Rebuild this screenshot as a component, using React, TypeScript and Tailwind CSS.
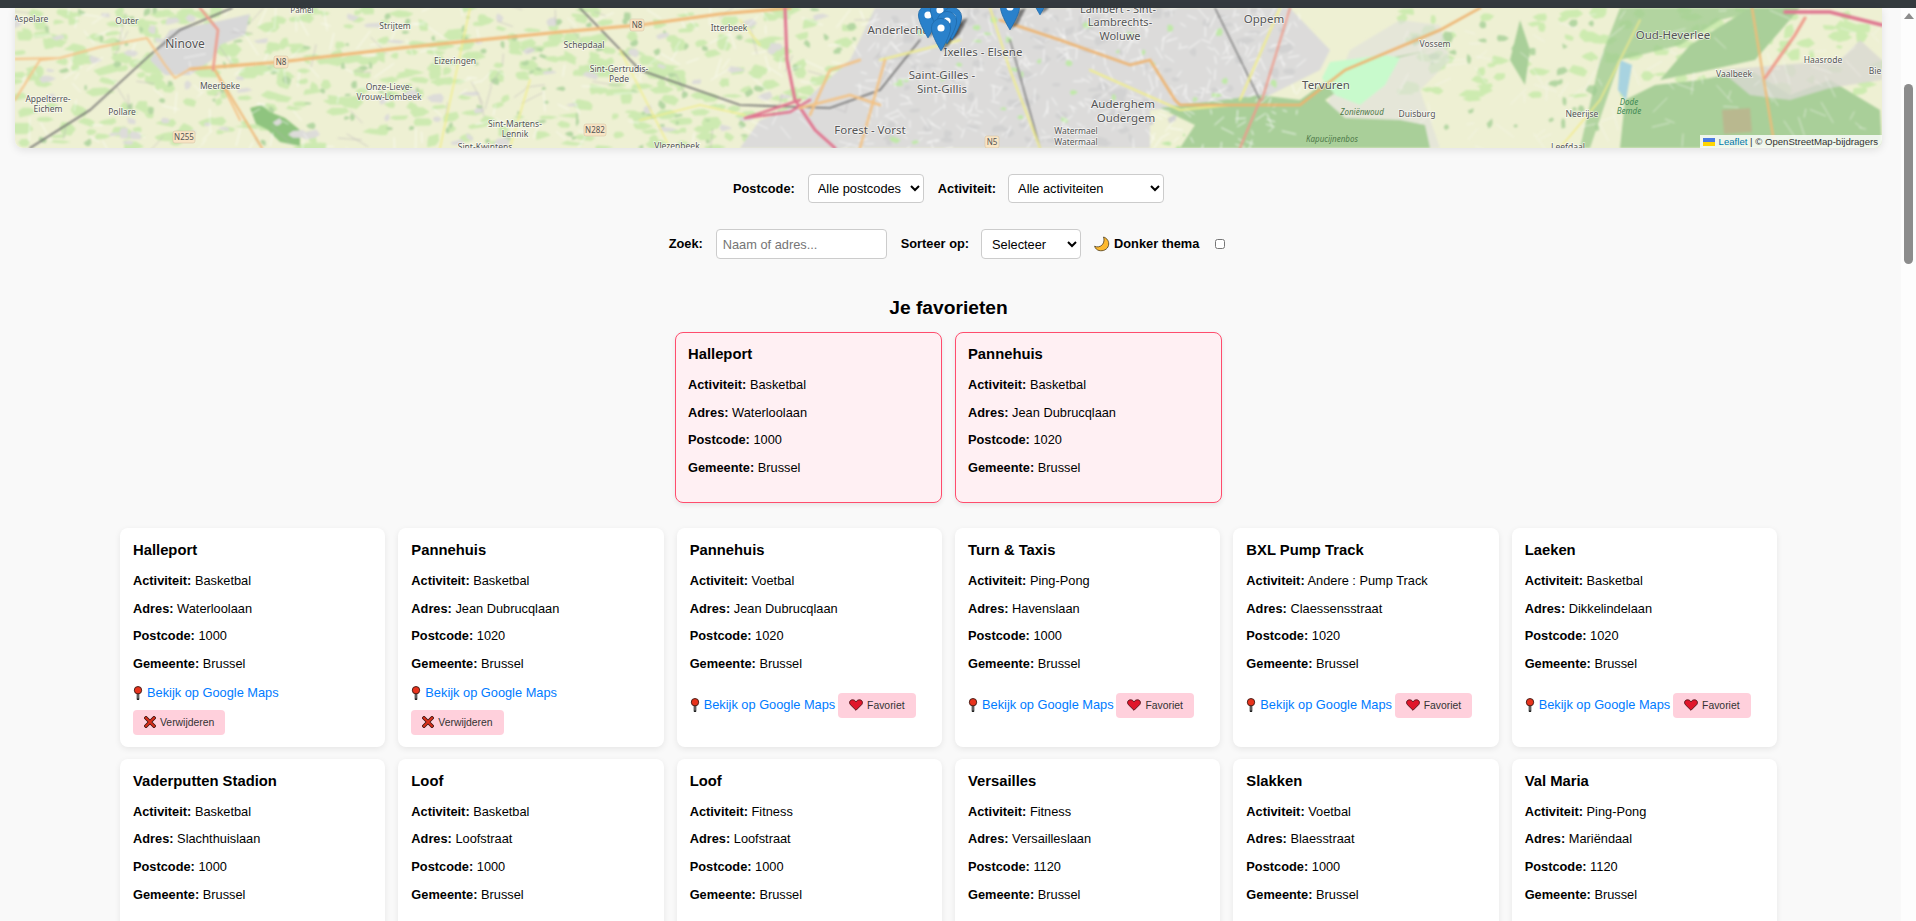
import React from 'react';

interface Spot {
  name: string;
  activity: string;
  address: string;
  postcode: string;
  removable?: boolean;
}

const favorites: Spot[] = [
  { name: 'Halleport', activity: 'Basketbal', address: 'Waterloolaan', postcode: '1000' },
  { name: 'Pannehuis', activity: 'Basketbal', address: 'Jean Dubrucqlaan', postcode: '1020' },
];

const spots: Spot[] = [
  { name: 'Halleport', activity: 'Basketbal', address: 'Waterloolaan', postcode: '1000', removable: true },
  { name: 'Pannehuis', activity: 'Basketbal', address: 'Jean Dubrucqlaan', postcode: '1020', removable: true },
  { name: 'Pannehuis', activity: 'Voetbal', address: 'Jean Dubrucqlaan', postcode: '1020' },
  { name: 'Turn & Taxis', activity: 'Ping-Pong', address: 'Havenslaan', postcode: '1000' },
  { name: 'BXL Pump Track', activity: 'Andere : Pump Track', address: 'Claessensstraat', postcode: '1020' },
  { name: 'Laeken', activity: 'Basketbal', address: 'Dikkelindelaan', postcode: '1020' },
  { name: 'Vaderputten Stadion', activity: 'Basketbal', address: 'Slachthuislaan', postcode: '1000' },
  { name: 'Loof', activity: 'Basketbal', address: 'Loofstraat', postcode: '1000' },
  { name: 'Loof', activity: 'Fitness', address: 'Loofstraat', postcode: '1000' },
  { name: 'Versailles', activity: 'Fitness', address: 'Versailleslaan', postcode: '1120' },
  { name: 'Slakken', activity: 'Voetbal', address: 'Blaesstraat', postcode: '1000' },
  { name: 'Val Maria', activity: 'Ping-Pong', address: 'Mariëndaal', postcode: '1120' },
];

// tiny seeded random so the map looks the same on every load
let seed = 42;
const rnd = () => {
  seed = (seed * 16807) % 2147483647;
  return seed / 2147483647;
};

function blob(cx: number, cy: number, rx: number, ry: number) {
  const n = 6;
  let d = '';
  for (let i = 0; i < n; i++) {
    const a = (i / n) * Math.PI * 2;
    const k = 0.5 + rnd() * 0.8;
    d += `${i ? 'L' : 'M'}${(cx + Math.cos(a) * rx * k).toFixed(1)} ${(cy + Math.sin(a) * ry * k).toFixed(1)}`;
  }
  return d + 'Z';
}

function scatter(x0: number, x1: number, y0: number, y1: number, count: number, rx: number, ry: number) {
  let d = '';
  for (let i = 0; i < count; i++) {
    d += blob(x0 + rnd() * (x1 - x0), y0 + rnd() * (y1 - y0), rx * (0.5 + rnd()), ry * (0.5 + rnd()));
  }
  return d;
}

function streets(x0: number, x1: number, y0: number, y1: number, count: number, len: number) {
  let d = '';
  for (let i = 0; i < count; i++) {
    const x = x0 + rnd() * (x1 - x0);
    const y = y0 + rnd() * (y1 - y0);
    const a = rnd() * Math.PI * 2;
    const l = len * (0.4 + rnd());
    d += `M${x.toFixed(1)} ${y.toFixed(1)}L${(x + Math.cos(a) * l).toFixed(1)} ${(y + Math.sin(a) * l).toFixed(1)}`;
  }
  return d;
}

const meadowLeft = scatter(15, 880, 8, 148, 420, 9, 4.5);
const meadowRight = scatter(1400, 1882, 8, 100, 110, 8, 5);
const forestLeft = scatter(15, 860, 8, 148, 130, 3.5, 3);
const forestRight = scatter(1400, 1600, 10, 130, 30, 4, 4);
const villages = scatter(15, 860, 15, 148, 70, 7, 4);
const cityBlocks = scatter(880, 1290, 10, 145, 110, 6, 4);
const cityGreen = scatter(890, 1280, 10, 148, 40, 4, 3);
const cityStreets = streets(860, 1300, 8, 148, 420, 11);
const lanes = streets(15, 880, 8, 148, 170, 18);
const lanesRight = streets(1390, 1882, 8, 148, 90, 18);
const edges = streets(15, 880, 8, 148, 50, 22);

const labels: [string, number, number, number][] = [
  ['Aspelare', 31, 22, 8.5], ['Outer', 127, 24, 8.5], ['Pamel', 302, 13, 8], ['Strijtem', 395, 29, 8.5],
  ['Itterbeek', 729, 31, 8.5], ['Ninove', 185, 48, 12], ['Schepdaal', 584, 48, 8.5], ['Eizeringen', 455, 64, 8.5],
  ['Sint-Gertrudis-', 619, 72, 8.5], ['Pede', 619, 82, 8.5], ['Meerbeke', 220, 89, 8.5], ['Onze-Lieve-', 389, 90, 8.5],
  ['Vrouw-Lombeek', 389, 100, 8.5], ['Appelterre-', 48, 102, 8.5], ['Eichem', 48, 112, 8.5], ['Pollare', 122, 115, 8.5],
  ['Sint-Martens-', 515, 127, 8.5], ['Lennik', 515, 137, 8.5], ['Sint-Kwintens', 485, 150, 8.5], ['Vlezenbeek', 677, 149, 8.5],
  ['Anderlecht', 897, 34, 11.5], ['Saint-Gilles -', 942, 79, 11.5], ['Sint-Gillis', 942, 93, 11.5], ['Forest - Vorst', 870, 134, 11.5],
  ['Ixelles - Elsene', 983, 56, 11.5], ['Lambert - Sint-', 1118, 13, 11], ['Lambrechts-', 1120, 26, 11], ['Woluwe', 1120, 40, 11],
  ['Oppem', 1264, 23, 11.5], ['Vossem', 1435, 47, 8.5], ['Oud-Heverlee', 1673, 39, 11.5], ['Haasrode', 1823, 63, 8.5],
  ['Vaalbeek', 1734, 77, 8.5], ['Tervuren', 1326, 89, 11.5], ['Auderghem', 1123, 108, 11.5], ['Oudergem', 1126, 122, 11.5],
  ['Watermael', 1076, 134, 8.5], ['Watermaal', 1076, 145, 8.5], ['Duisburg', 1417, 117, 8.5], ['Neerijse', 1582, 117, 8.5],
  ['Bie', 1875, 74, 8.5], ['Leefdaal', 1568, 150, 8.5],
];

const shields: [string, number, number][] = [['N8', 637, 25], ['N8', 281, 62], ['N255', 184, 137], ['N282', 595, 130], ['N5', 992, 142]];

// tip of each marker, back to front
const markers: [number, number][] = [[1040, 15], [1010, 30], [932, 28], [928, 38], [940, 33], [952, 40], [947, 44], [941, 51]];

function Pin({ x, y }: { x: number; y: number }) {
  return (
    <g transform={`translate(${x - 10} ${y - 33}) scale(0.8)`}>
      <path d="M12.5 41C12.5 41 0.5 22 0.5 12.5a12 12 0 0 1 24 0C24.500 22 12.500 41 12.500 41Z" fill="#2a81cb" stroke="#1f6aa8" />
      <circle cx="12.5" cy="12.5" r="4.5" fill="#fff" />
    </g>
  );
}

function MapView() {
  return (
    <div className="relative h-[140px] overflow-hidden rounded-b-lg shadow-[0_2px_8px_rgba(0,0,0,0.1)]">
      <svg className="block h-full w-full" viewBox="15 8 1867 140" preserveAspectRatio="none" fontFamily="'Noto Sans', sans-serif">
        <defs>
          <filter id="soft"><feGaussianBlur stdDeviation="0.8" /></filter>
        </defs>
        <rect x="15" y="8" width="1867" height="140" fill="#eef0d3" />
        <g filter="url(#soft)">
          <path d={meadowLeft} fill="#cdeab1" />
          <path d={meadowRight} fill="#cdebb0" />
          <path d={forestLeft} fill="#b3d6a2" />
          <path d={forestRight} fill="#b3d6a2" />
          <path d="M250 108L262 105L270 112L285 118L300 130L300 146L280 142L268 130L256 124Z" fill="#8fc47f" />
          <path d={villages} fill="#dddcd9" />
          <path d="M150 60L170 30L215 22L250 14L245 35L220 45L212 60L190 75L165 75Z" fill="#d8d8d8" />
          <path d="M740 148L760 120L800 105L850 60L875 8L1290 8L1330 50L1320 70L1260 100L1150 110L1150 148Z" fill="#dcdbda" />
          <path d="M1350 50L1400 20L1440 25L1450 60L1420 90L1440 148L1330 148L1325 110Z" fill="#e0dfdc" opacity="0.6" />
          <path d={cityBlocks} fill="#d2d2d2" />
          <path d={cityGreen} fill="#c0e8a8" />
          <path d="M1160 108L1260 95L1300 100L1345 68L1375 60L1400 56L1430 50L1380 62L1325 100L1345 118L1400 120L1425 125L1430 148L1180 148L1195 125Z" fill="#a9cf99" />
          <path d="M1330 62L1385 55L1400 58L1385 85L1360 105L1335 95L1322 78Z" fill="#c8facc" />
          <path d="M1520 20L1530 50L1525 85L1510 60Z" fill="#a9cf99" />
          <path d="M1625 100L1655 85L1700 80L1750 70L1790 95L1830 80L1880 110L1882 148L1620 148Z" fill="#a9cf99" />
          <path d="M1590 148L1620 60L1680 45L1720 20L1770 8L1620 8L1600 60L1580 148Z" fill="#9dcb8f" opacity="0.75" />
          <path d="M1750 8L1800 8L1755 60L1700 72L1660 80L1690 45Z" fill="#a9cf99" />
          <path d="M1720 70L1840 60L1860 40L1882 60L1882 80L1830 88L1790 100L1750 95Z" fill="#d9d8d2" opacity="0.8" />
          <path d="M1722 110L1750 108L1752 132L1724 134Z" fill="#b9b88f" />
          <path d="M1620 60L1632 65L1626 100L1618 90Z" fill="#a8d3e0" />
          <path d={lanes} stroke="#ffffff" strokeWidth="0.9" fill="none" opacity="0.7" />
          <path d={edges} stroke="#b9b3b8" strokeWidth="0.7" fill="none" opacity="0.8" />
          <path d={lanesRight} stroke="#f7f7f3" strokeWidth="0.9" fill="none" opacity="0.6" />
          <path d={cityStreets} stroke="#ffffff" strokeWidth="1" fill="none" opacity="0.75" />
        </g>
        <g fill="none" strokeLinecap="round" filter="url(#soft)">
          <path d="M30 148L90 110L150 55L180 30L232 8" stroke="#6f6f6f" strokeWidth="1.6" />
          <path d="M580 8L640 70L740 105L830 108L880 90L920 40" stroke="#6f6f6f" strokeWidth="1.6" />
          <path d="M1010 40L1040 148M1215 8L1260 100" stroke="#6f6f6f" strokeWidth="1.3" />
          <path d="M470 8L440 148M530 80L510 148M620 50L670 148M740 20L760 45M640 120L700 105L745 115" stroke="#f1ee8e" strokeWidth="1.5" />
          <path d="M990 8L1010 70L1040 148M880 60L960 40M1090 70L1180 110L1230 105M1280 8L1240 100" stroke="#f1ee8e" strokeWidth="2" />
          <path d="M15 100L40 60L60 58M15 59L60 58L100 47L147 38L165 65L175 78L190 69M240 120L215 70" stroke="#f5c48a" strokeWidth="2" />
          <path d="M190 69L280 62L400 48L560 32L640 25L720 14L790 8" stroke="#f0b978" strokeWidth="3.200" />
          <path d="M215 70L262 148" stroke="#f0b978" strokeWidth="2" />
          <path d="M200 8L218 30L213 70" stroke="#ee9c8c" strokeWidth="2.500" />
          <path d="M785 8L787 60L795 100L815 130L835 148" stroke="#e0758f" strokeWidth="3" />
          <path d="M745 118L770 110L800 100M745 118L790 112L810 100" stroke="#e0758f" strokeWidth="2.500" />
          <path d="M810 115L830 70L860 60M800 108L850 95L880 105M885 60L860 148" stroke="#f3c285" strokeWidth="2.500" />
          <path d="M1000 20L1060 40L1130 65L1150 60L1175 100L1180 105L1260 105L1300 105L1345 70L1440 30L1480 8" stroke="#eeb36f" strokeWidth="2.500" />
          <path d="M1260 100L1240 148M1262 100L1290 8" stroke="#ee9c8c" strokeWidth="2" />
          <path d="M1752 8L1775 148" stroke="#f0bc78" strokeWidth="2.200" />
          <path d="M1765 78L1795 35L1805 18" stroke="#ee9c8c" strokeWidth="3" />
          <path d="M1785 12L1830 12L1882 25" stroke="#df7690" strokeWidth="3.500" />
          <path d="M1560 148L1600 100L1625 50L1640 20" stroke="#f3eb8a" strokeWidth="1.500" />
        </g>
        {shields.map(([t, x, y], i) => (
          <g key={i}>
            <rect x={x - (t.length > 2 ? 11 : 7)} y={y - 6} width={t.length > 2 ? 22 : 14} height="12" rx="2" fill="#f8e4c4" stroke="#d8c7a8" strokeWidth="0.6" />
            <text x={x} y={y + 3} fontSize="8" textAnchor="middle" fill="#555">{t}</text>
          </g>
        ))}
        {labels.map(([t, x, y, s], i) => (
          <text key={i} x={x} y={y} fontSize={s} textAnchor="middle" fill="#555" stroke="#ffffff" strokeWidth="1.500" strokeOpacity="0.65" paintOrder="stroke">{t}</text>
        ))}
        <text x="1362" y="115" fontSize="8" textAnchor="middle" fontStyle="italic" fill="#4f7a4a">Zoniënwoud</text>
        <text x="1332" y="142" fontSize="8" textAnchor="middle" fontStyle="italic" fill="#4f7a4a">Kapucijnenbos</text>
        <text x="1629" y="105" fontSize="8" textAnchor="middle" fontStyle="italic" fill="#3f8a55">Dode</text>
        <text x="1629" y="114" fontSize="8" textAnchor="middle" fontStyle="italic" fill="#3f8a55">Bemde</text>
        {markers.map(([x, y], i) => (
          <path key={i} d={`M${x} ${y}L${x + 9} ${y - 20}L${x + 16} ${y - 22}L${x + 8} ${y - 6}Z`} fill="#000" opacity="0.45" filter="url(#soft)" />
        ))}
        {markers.map(([x, y], i) => <Pin key={i} x={x} y={y} />)}
      </svg>
      <div className="absolute bottom-0 right-0 flex h-[13px] items-center bg-white/80 pl-[3px] pr-[4px] text-[9.6px] leading-none text-[#333]">
        <svg className="mr-1 h-2 w-3" viewBox="0 0 12 8"><rect width="12" height="4" fill="#4C7BE1" /><rect y="4" width="12" height="4" fill="#FFD500" /></svg>
        <a className="text-[#0078A8]">Leaflet</a>
        <span className="whitespace-pre"> | © OpenStreetMap-bijdragers</span>
      </div>
    </div>
  );
}

function PinEmoji() {
  return (
    <svg className="mr-1 inline-block h-[14px] w-[10px] align-[-3px]" viewBox="0 0 10 14">
      <path d="M5 7V13" stroke="#222" strokeWidth="2.600" strokeLinecap="round" />
      <path d="M5 7V12.500" stroke="#aaa" strokeWidth="0.900" />
      <circle cx="5" cy="4.200" r="3.700" fill="#e8331c" stroke="#3a1a14" strokeWidth="0.900" />
    </svg>
  );
}

function HeartEmoji() {
  return (
    <svg className="mr-1 inline-block h-3 w-[14px] align-[-2px]" viewBox="0 0 14 12">
      <path d="M7 11.300L1.200 5.500C-0.300 3.300 1 0.800 3.500 0.800C5 0.800 6.300 1.600 7 2.900C7.700 1.600 9 0.800 10.500 0.800C13 0.800 14.300 3.300 12.800 5.500Z" fill="#e0162b" stroke="#4a1014" strokeWidth="0.900" />
    </svg>
  );
}

function CrossEmoji() {
  return (
    <svg className="mr-1 inline-block h-3 w-3 align-[-2px]" viewBox="0 0 12 12">
      <path d="M2 2L10 10M10 2L2 10" stroke="#3a1410" strokeWidth="3.600" strokeLinecap="square" />
      <path d="M2 2L10 10M10 2L2 10" stroke="#d9301c" strokeWidth="2" strokeLinecap="square" />
    </svg>
  );
}

function MoonEmoji() {
  return (
    <svg className="mr-1 h-[16px] w-[16px] shrink-0" viewBox="0 0 16 16">
      <path d="M9.500 1C13 2 15.500 5.500 14.500 9.500C13.500 13.500 9 15.500 5 14.500C3 14 1.200 12.500 0.600 10.200C3 11.500 6.500 11 8.500 8.500C10 6.500 10.500 3.500 9.500 1Z" fill="#fdb92e" stroke="#4a3a1a" strokeWidth="0.800" />
    </svg>
  );
}

function Row({ label, value }: { label: string; value: string }) {
  return (
    <p className="mb-[13px] text-[12.8px] leading-[14.700px] text-black">
      <strong className="font-bold">{label}:</strong> {value}
    </p>
  );
}

function SpotCard({ spot, favorite, linked }: { spot: Spot; favorite?: boolean; linked?: boolean }) {
  return (
    <div
      className={
        favorite
          ? 'w-[267px] rounded-lg border border-[#ff4d6d] bg-[#fff0f3] px-[12px] pb-[13px] pt-[12px] shadow-[0_2px_5px_rgba(0,0,0,0.08)]'
          : 'rounded-lg bg-white px-[13px] pb-[12px] pt-[13px] shadow-[0_2px_6px_rgba(0,0,0,0.08)]'
      }
    >
      <h3 className="mb-[15px] text-[14.800px] font-bold leading-[18px] text-black">{spot.name}</h3>
      <Row label="Activiteit" value={spot.activity} />
      <Row label="Adres" value={spot.address} />
      <Row label="Postcode" value={spot.postcode} />
      <Row label="Gemeente" value="Brussel" />
      {linked && (
        <div className="text-[12.8px] leading-[16px]">
          <a className="text-[#007bff]">
            <PinEmoji />
            Bekijk op Google Maps
          </a>
          <span className="text-[10px]"> </span>
          <button className="mt-2 inline-block h-[25px] rounded bg-[#ffd0dc] px-[11px] text-[10.400px] leading-[25px] text-[#333]">
            {spot.removable ? <CrossEmoji /> : <HeartEmoji />}
            {spot.removable ? 'Verwijderen' : 'Favoriet'}
          </button>
        </div>
      )}
    </div>
  );
}

const labelClass = 'text-[12.8px] font-bold text-black';
const fieldClass = 'rounded border border-[#ccc] bg-white text-[12.8px] text-black';

export default function App() {
  return (
    <div className="flex h-[921px] flex-col overflow-hidden bg-[#f9f9f9] font-['Liberation_Sans',Arial,sans-serif]">
      <div className="h-2 shrink-0 bg-[#343a3e]" />
      <div className="flex min-h-0 flex-1">
        <main className="min-w-0 flex-1 pl-[15px] pr-[19px]">
          <MapView />

          <div className="mt-[26px] flex items-center justify-center">
            <label className={labelClass}>Postcode:</label>
            <select className={`${fieldClass} ml-[13px] h-[29px] w-[116px] px-[5px]`}>
              <option>Alle postcodes</option>
            </select>
            <label className={`${labelClass} ml-[14px]`}>Activiteit:</label>
            <select className={`${fieldClass} ml-[12px] h-[29px] w-[156px] px-[5px]`}>
              <option>Alle activiteiten</option>
            </select>
          </div>

          <div className="mt-[26px] flex items-center justify-center">
            <label className={labelClass}>Zoek:</label>
            <input className={`${fieldClass} ml-[13px] h-[30px] w-[171px] px-[6px] placeholder:text-[#757575]`} placeholder="Naam of adres..." />
            <label className={`${labelClass} ml-[14px]`}>Sorteer op:</label>
            <select className={`${fieldClass} ml-[12px] h-[30px] w-[100px] px-[6px]`}>
              <option>Selecteer</option>
            </select>
            <span className={`${labelClass} ml-[13px] flex items-center`}>
              <MoonEmoji />
              Donker thema
            </span>
            <input type="checkbox" className="ml-4 mr-[3px] h-[10px] w-[10px] rounded-sm border border-[#999] bg-white" />
          </div>

          <h2 className="mt-[37px] text-center text-[19.200px] font-bold leading-[23px] text-black">Je favorieten</h2>

          <div className="mt-[13px] flex justify-center gap-[13px]">
            {favorites.map((s) => <SpotCard key={s.name} spot={s} favorite />)}
          </div>

          <div className="mx-auto mt-[25px] grid w-[1657px] grid-cols-6 gap-x-[13px] gap-y-[12px]">
            {spots.map((s, i) => <SpotCard key={i} spot={s} linked />)}
          </div>
        </main>

        <aside className="relative w-[15px] shrink-0 bg-[#fdfdfd]">
          <div className="absolute left-[3px] top-[5px] h-0 w-0 border-x-[5px] border-b-[6px] border-x-transparent border-b-[#8c8c8c]" />
          <div className="absolute left-[3px] top-[76px] h-[180px] w-[9px] rounded-full bg-[#8c8c8c]" />
        </aside>
      </div>
    </div>
  );
}
